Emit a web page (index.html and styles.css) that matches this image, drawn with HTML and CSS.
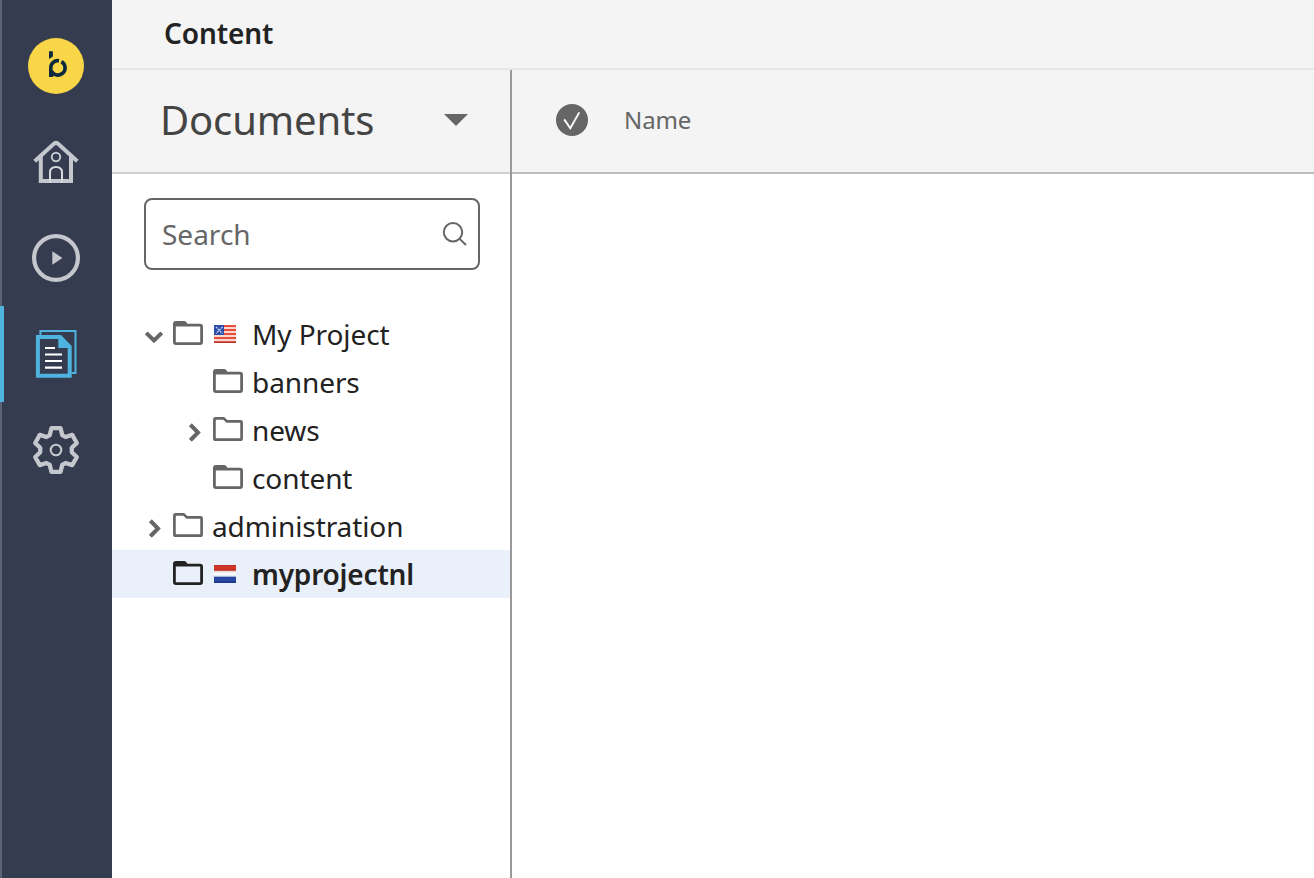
FILE: index.html
```html
<!DOCTYPE html>
<html lang="en">
<head>
<meta charset="utf-8">
<title>Content</title>
<link rel="stylesheet" href="styles.css">
</head>
<body>
<svg width="0" height="0" class="defs" aria-hidden="true">
  <symbol id="folder-tab" viewBox="0 0 30 24">
    <path fill-rule="evenodd" fill="currentColor" d="M3 0H11.5Q13 0 14.5 2.8H27Q30 2.8 30 5.8V21Q30 24 27 24H3Q0 24 0 21V3Q0 0 3 0ZM2.8 5.6V21.2H27.2V5.6Z"/>
  </symbol>
  <symbol id="folder-open" viewBox="0 0 30 24">
    <path fill="none" stroke="currentColor" stroke-width="2.7" stroke-linejoin="round" d="M2.6 1.4H10.8L13.8 4.4H27.4Q28.6 4.4 28.6 5.6V21.4Q28.6 22.6 27.4 22.6H2.6Q1.4 22.6 1.4 21.4V2.6Q1.4 1.4 2.6 1.4Z"/>
  </symbol>
  <symbol id="chev" viewBox="0 0 12 19">
    <path fill="none" stroke="currentColor" stroke-width="4" d="M1.4 1.7L9 9.5L1.4 17.3"/>
  </symbol>
</svg>
<div class="app">
  <nav class="sidebar">
    <a class="nav-item"><svg width="56" height="56" viewBox="0 0 56 56"><circle cx="28" cy="28" r="28" fill="#f9d648"/><path fill="#0c2a3c" d="M21 13.3H24.9V18.4L21 21Z"/><path fill="none" stroke="#0c2a3c" stroke-width="3.6" d="M22.8 39V30A7.2 7.2 0 0 1 31 22.7M33.4 23.6A7.2 7.2 0 1 1 23.4 33"/><path fill="#0c2a3c" d="M21 33H24L26.5 37L24.6 39H21Z"/></svg></a>
    <a class="nav-item"><svg width="48" height="48" viewBox="0 0 48 48" fill="none" stroke="#c4c7ce"><path stroke-width="4" d="M2.7 23.3L22.2 5.6Q24 4.1 25.8 5.6L45.3 23.3"/><path stroke-width="4" d="M8.8 18V43H39V18"/><circle cx="24" cy="19" r="4.2" stroke-width="2"/><path stroke-width="2" stroke="#d9dbdf" d="M18 44.8V34.5Q18 29 24 29T30 34.5V44.8"/></svg></a>
    <a class="nav-item"><svg width="48" height="48" viewBox="0 0 48 48"><circle cx="24" cy="24" r="21.9" fill="none" stroke="#c4c7ce" stroke-width="4.2"/><path fill="#c4c7ce" d="M20.3 17.2L30.4 24L20.3 30.8Z"/></svg></a>
    <a class="nav-item active"><svg width="48" height="48" viewBox="0 0 48 48" fill="none" stroke="#4fb3df"><path stroke-width="2" d="M8.4 5V1H43.5V43H39.5"/><path stroke-width="4" d="M26.8 7H5.9V45.8H37.7V18"/><path fill="#4fb3df" stroke="none" d="M26.3 5H29L39.7 16V18H26.3Z"/><path stroke="#fff" stroke-width="2.1" d="M13 18H23M13 24.5H30M13 31H30M13 37.6H30"/></svg></a>
    <a class="nav-item"><svg width="48" height="48" viewBox="0 0 48 48" fill="none" stroke="#c4c7ce"><path stroke-width="4.3" stroke-linejoin="round" d="M19.4 2.2H28.6L30.2 9.1L33.5 11L40.2 8.9L44.8 17L39.8 21.8V26.2L44.8 31L40.2 39.1L33.5 37L30.2 38.9L28.6 45.8H19.4L17.8 38.9L14.5 37L7.8 39.1L3.2 31L8.2 26.2V21.8L3.2 17L7.8 8.9L14.5 11L17.8 9.1Z"/><circle cx="24" cy="24" r="5.3" stroke-width="2.1"/></svg></a>
  </nav>
  <div class="page">
    <header class="topbar">Content</header>
    <div class="panes">
      <aside class="tree-pane">
        <div class="pane-head"><span class="title">Documents</span><svg width="24" height="12" viewBox="0 0 24 12"><path fill="#666" d="M0 0H24L12 12Z"/></svg></div>
        <div class="search"><span>Search</span><svg width="26" height="26" viewBox="0 0 26 26" fill="none" stroke="#666" stroke-width="2"><circle cx="11" cy="11.2" r="9.2"/><path d="M17.4 17.6L24 24"/></svg></div>
        <div class="tree">
          <div class="row"><span class="toggle"><svg class="down" width="12" height="19"><use href="#chev"/></svg></span><svg class="folder" width="30" height="24"><use href="#folder-tab"/></svg>
            <svg class="flag" width="22" height="18" viewBox="0 0 22 18"><path fill="#f9d7cf" d="M0 0H22V18H0Z"/><path fill="#e84f3b" d="M0 0H22V2H0ZM0 4H22V6H0ZM0 8H22V10H0ZM0 12H22V14H0Z"/><path fill="#bd2d20" d="M0 16.3H22V18H0Z"/><path fill="#2c4da8" d="M0 0H10V10H0Z"/><path stroke="#c5d2f0" stroke-width="1.3" stroke-dasharray="2 .8" d="M2 2L8.5 8.5M8.5 2L2 8.5"/></svg><span>My Project</span></div>
          <div class="row child"><span class="toggle"></span><svg class="folder" width="30" height="24"><use href="#folder-tab"/></svg><span>banners</span></div>
          <div class="row child"><span class="toggle"><svg width="12" height="19"><use href="#chev"/></svg></span><svg class="folder" width="30" height="24"><use href="#folder-open"/></svg><span>news</span></div>
          <div class="row child"><span class="toggle"></span><svg class="folder" width="30" height="24"><use href="#folder-tab"/></svg><span>content</span></div>
          <div class="row"><span class="toggle"><svg width="12" height="19"><use href="#chev"/></svg></span><svg class="folder" width="30" height="24"><use href="#folder-open"/></svg><span>administration</span></div>
          <div class="row selected"><span class="toggle"></span><svg class="folder" width="30" height="24"><use href="#folder-tab"/></svg>
            <svg class="flag" width="22" height="18" viewBox="0 0 22 18"><defs><linearGradient id="nl" x1="0" y1="0" x2="0" y2="1"><stop offset="0" stop-color="#b92c20"/><stop offset=".1" stop-color="#d43a28"/><stop offset=".29" stop-color="#c43022"/><stop offset=".36" stop-color="#e8d8d8"/><stop offset=".48" stop-color="#fff"/><stop offset=".62" stop-color="#e6e8f0"/><stop offset=".68" stop-color="#2744a0"/><stop offset=".85" stop-color="#2948a4"/><stop offset="1" stop-color="#1b327f"/></linearGradient></defs><path fill="url(#nl)" d="M0 0H22V18H0Z"/></svg><span>myprojectnl</span></div>
        </div>
      </aside>
      <main class="list-pane">
        <div class="list-head"><svg width="32" height="32" viewBox="0 0 32 32"><circle cx="16" cy="16" r="16" fill="#666"/><path fill="none" stroke="#fff" stroke-width="1.9" d="M8.2 15.4L14.3 24.2L23.3 8.4"/></svg><span>Name</span></div>
      </main>
    </div>
  </div>
</div>
</body>
</html>
```
FILE: styles.css
```css
* { box-sizing: border-box; }
body { margin: 0; font-family: "Noto Sans", "Open Sans", sans-serif; font-size: 28px; letter-spacing: -0.09px; color: #222; background: #fff; }
.defs { position: absolute; }
svg { display: block; flex: none; }
.app { display: flex; height: 878px; overflow: hidden; }
.sidebar { width: 112px; flex: none; background: #353c50; border-left: 2px solid #5b6476; padding-top: 18px; }
.nav-item { display: flex; height: 96px; align-items: center; justify-content: center; padding-right: 2px; }
.nav-item.active { border-left: 4px solid #4fb3df; margin-left: -2px; padding-right: 4px; }
.page { flex: 1; display: flex; flex-direction: column; min-width: 0; }
.topbar { height: 70px; line-height: 67px; padding-left: 52px; font-weight: 600; background: #f4f4f4; border-bottom: 2px solid #e7e7e7; }
.panes { flex: 1; display: flex; }
.tree-pane { width: 400px; flex: none; border-right: 2px solid #999; }
.pane-head { height: 104px; display: flex; align-items: center; justify-content: space-between; padding: 0 42px 2px 48px; background: #f4f4f4; border-bottom: 2px solid #d2d2d2; }
.title { font-size: 40px; line-height: 48px; letter-spacing: -0.14px; color: #444; }
.search { margin: 24px 30px 40px 32px; height: 72px; border: 2px solid #666; border-radius: 8px; display: flex; align-items: center; justify-content: space-between; padding: 0 10px 0 16px; color: #666; letter-spacing: 0; }
.row { height: 48px; line-height: 48px; display: flex; align-items: center; padding-left: 32px; white-space: nowrap; }
.row.child { padding-left: 72px; }
.toggle { width: 29px; height: 24px; flex: none; padding: 5px 0 0 5px; color: #666; }
.toggle .down { transform: translate(-1px, 1px) rotate(90deg); }
.folder { color: #666; margin: 0 9px 2px 0; }
.flag { margin: 0 16px 0 2px; }
.selected { background: #eaf0f9; font-weight: 600; letter-spacing: -0.2px; }
.selected .folder { color: #222; }
.list-pane { flex: 1; }
.list-head { height: 104px; display: flex; align-items: center; gap: 36px; padding: 0 44px 2px; background: #f4f4f4; border-bottom: 2px solid #bdbdbd; font-size: 24px; line-height: 32px; color: #666; }
```
